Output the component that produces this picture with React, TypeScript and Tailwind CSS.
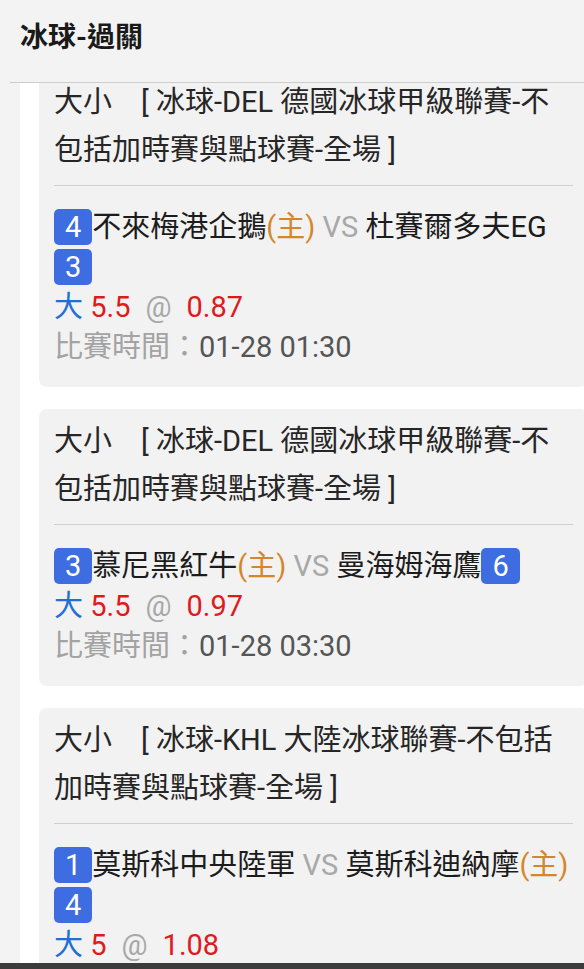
import React from "react";

type Match = {
  league: string;
  home: { score: string; name: string; isHome: boolean };
  away: { score: string; name: string; isHome: boolean };
  line: string;
  odds: string;
  time?: string;
};

const matches: Match[] = [
  {
    league: "大小　[ 冰球-DEL 德國冰球甲級聯賽-不包括加時賽與點球賽-全場 ]",
    home: { score: "4", name: "不來梅港企鵝", isHome: true },
    away: { score: "3", name: "杜賽爾多夫EG", isHome: false },
    line: "5.5",
    odds: "0.87",
    time: "01-28 01:30",
  },
  {
    league: "大小　[ 冰球-DEL 德國冰球甲級聯賽-不包括加時賽與點球賽-全場 ]",
    home: { score: "3", name: "慕尼黑紅牛", isHome: true },
    away: { score: "6", name: "曼海姆海鷹", isHome: false },
    line: "5.5",
    odds: "0.97",
    time: "01-28 03:30",
  },
  {
    league: "大小　[ 冰球-KHL 大陸冰球聯賽-不包括加時賽與點球賽-全場 ]",
    home: { score: "1", name: "莫斯科中央陸軍", isHome: false },
    away: { score: "4", name: "莫斯科迪納摩", isHome: true },
    line: "5",
    odds: "1.08",
  },
];

function Badge({ v }: { v: string }) {
  return (
    <span className="inline-block bg-[#3d6de0] text-white rounded-[5px] px-[11px] leading-[36px]">
      {v}
    </span>
  );
}

function Card({ m }: { m: Match }) {
  return (
    <div className="bg-[#f2f2f2] rounded-[8px] px-[15px] pt-[8px] pb-[20px] text-[29px] shrink-0">
      <div className="leading-[48px] text-[#262626]">{m.league}</div>
      <div className="mt-[11px] mb-[21px] h-px bg-[#cfcfcf]" />
      <div className="leading-[40px] text-[#1c1c1c]">
        <Badge v={m.home.score} />
        {m.home.name}
        {m.home.isHome && <span className="text-[#d5862b]">(主)</span>}
        <span className="text-[#a8a8a8]"> VS </span>
        {m.away.name}
        {m.away.isHome && <span className="text-[#d5862b]">(主)</span>}
        <Badge v={m.away.score} />
      </div>
      <div className="leading-[40px]">
        <span className="text-[#1f6fd6]">大</span>
        <span className="text-[#e0191c]"> {m.line}</span>
        <span className="text-[#a8a8a8] mx-[15px]">@</span>
        <span className="text-[#e0191c]">{m.odds}</span>
      </div>
      {m.time && (
        <div className="leading-[40px]">
          <span className="text-[#a3a3a3]">比賽時間：</span>
          <span className="text-[#555555]">{m.time}</span>
        </div>
      )}
    </div>
  );
}

export default function App() {
  return (
    <div className="w-full h-[969px] overflow-hidden bg-[#f3f3f3] flex flex-col font-[Roboto,'Noto_Sans_CJK_TC',sans-serif]">
      <div className="h-[83px] shrink-0 ml-[10px] pl-[10px] border-b border-[#cdcdcd] flex items-center pb-[7px]">
        <h1 className="text-[28px] font-bold text-[#1a1a1a]">冰球-過關</h1>
      </div>
      <div className="flex-1 min-h-0 flex">
        <div className="w-[20px] shrink-0" />
        <div className="flex-1 bg-white pl-[19px] overflow-hidden">
          <div className="-mt-[13px] -mr-[4px] flex flex-col gap-[22px]">
            {matches.map((m, i) => (
              <Card key={i} m={m} />
            ))}
          </div>
        </div>
      </div>
      <div className="h-[6px] shrink-0 bg-[#3b3b3b]" />
    </div>
  );
}
